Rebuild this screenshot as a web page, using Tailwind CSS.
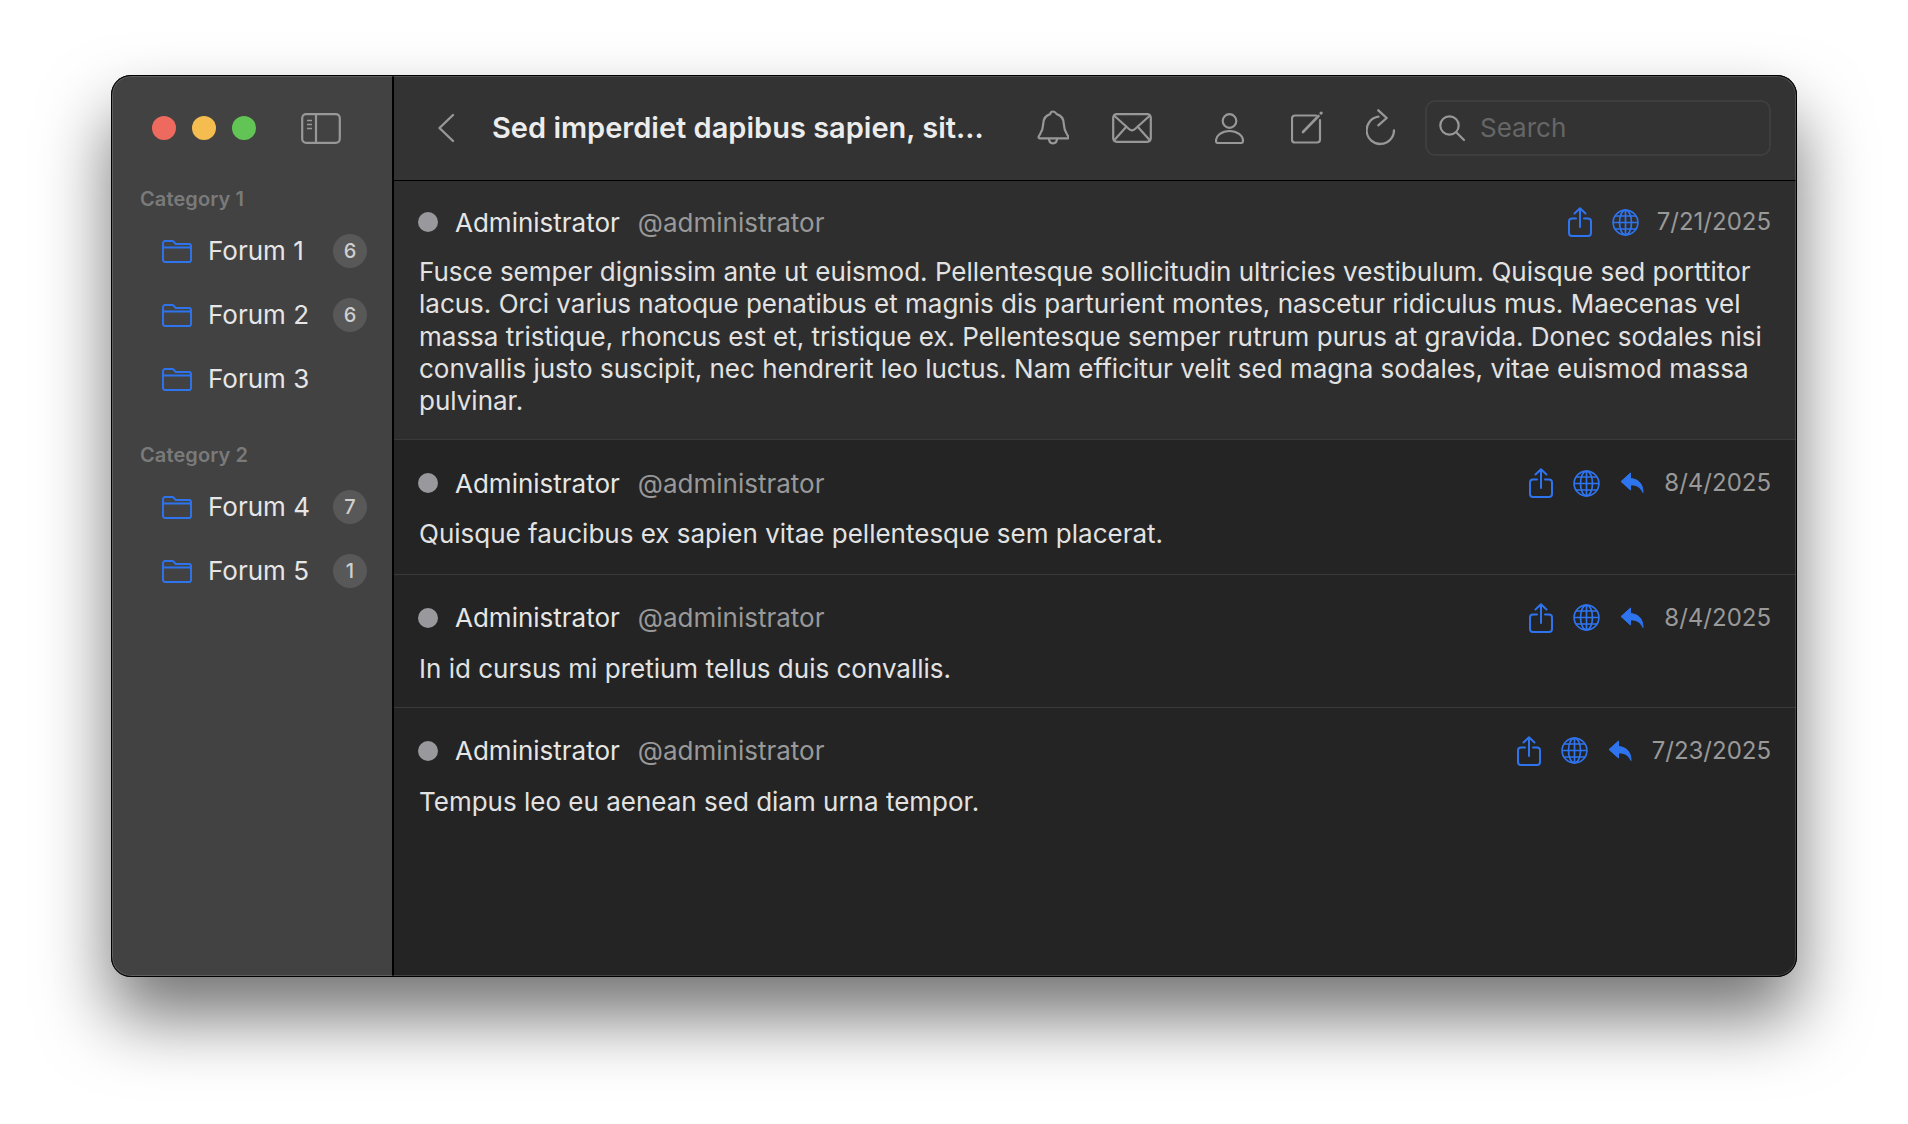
<!DOCTYPE html>
<html lang="en">
<head>
    <meta charset="UTF-8">
    <title>Forum</title>
    <script src="https://cdn.jsdelivr.net/npm/@tailwindcss/browser@4"></script>
</head>
<body class="bg-white font-['Inter',sans-serif] w-[1908px] h-[1124px] overflow-hidden pt-[75px] pl-[111px]">
    <!-- shared icons -->
    <svg class="hidden">
        <symbol id="folder" viewBox="0 0 30 23"><path fill="none" stroke="currentColor" stroke-width="1.9" stroke-linejoin="round" d="M1 8V3a2 2 0 0 1 2-2h7c1 0 1.600.4 2.200 1.100L13.500 4H27a2 2 0 0 1 2 2v14a2 2 0 0 1-2 2H3a2 2 0 0 1-2-2V8zM1 7.500h28"/></symbol>
        <symbol id="share" viewBox="0 0 24 30"><path fill="none" stroke="currentColor" stroke-width="2" stroke-linecap="round" stroke-linejoin="round" d="M8 11.500H4a3 3 0 0 0-3 3V26a3 3 0 0 0 3 3h16a3 3 0 0 0 3-3V14.500a3 3 0 0 0-3-3h-4M12 20V1.500M6.500 6.500 12 1.200l5.500 5.300"/></symbol>
        <symbol id="globe" viewBox="0 0 27 27"><g fill="none" stroke="currentColor" stroke-width="1.700"><circle cx="13.500" cy="13.500" r="12.400"/><ellipse cx="13.500" cy="13.500" rx="6" ry="12.400"/><path d="M13.500 1v25M1 13.500h25M3 7h21M3 20h21"/></g></symbol>
        <symbol id="reply" viewBox="0 0 24 22"><path fill="currentColor" stroke="currentColor" stroke-width="1" stroke-linejoin="round" d="M10.500 1 1 9.500l9.500 8.500v-5c5.500-.4 9.500 1.500 12.500 7.500 0-8.500-4.500-13.500-12.500-14z"/></symbol>
    </svg>

    <div class="relative w-[1686px] h-[902px] rounded-[20px] flex shadow-[0_40px_70px_rgba(0,0,0,0.55)] bg-[#242424]">
        <!-- sidebar -->
        <aside class="w-[283px] shrink-0 bg-[#424242] rounded-l-[20px] pl-[29px] border-r-2 border-black">
            <div class="h-[106px] flex items-center">
                <div class="flex gap-[16px] ml-[12px]">
                    <span class="w-[24px] h-[24px] rounded-full bg-[#ee6a5f]"></span>
                    <span class="w-[24px] h-[24px] rounded-full bg-[#f5bd4f]"></span>
                    <span class="w-[24px] h-[24px] rounded-full bg-[#61c454]"></span>
                </div>
                <svg class="ml-[45px]" width="40" height="31" viewBox="0 0 40 31" fill="none" stroke="#989898" stroke-width="2.200">
                    <rect x="1.200" y="1.200" width="37.600" height="28.600" rx="4"/>
                    <path d="M15 1.200v28.600"/>
                    <path d="M6 7.500h5M6 11.500h5M6 15.500h5" stroke-width="1.600"/>
                </svg>
            </div>
            <div class="text-[20px] font-semibold tracking-[0.1px] text-[#7a7a7a] leading-[24px] mt-[6px]">Category 1</div>
            <div class="mt-[8px]">
                <div class="h-[64px] flex items-center pl-[22px] text-[#2f74ef]">
                    <svg width="30" height="23"><use href="#folder"/></svg>
                    <span class="ml-[16px] text-[26px] text-[#e6e6e6] leading-[32px]">Forum 1</span>
                    <span class="ml-auto mr-[25px] w-[34px] h-[34px] rounded-full bg-[#585858] text-[#cfcfcf] text-[20px] font-medium flex items-center justify-center">6</span>
                </div>
                <div class="h-[64px] flex items-center pl-[22px] text-[#2f74ef]">
                    <svg width="30" height="23"><use href="#folder"/></svg>
                    <span class="ml-[16px] text-[26px] text-[#e6e6e6] leading-[32px]">Forum 2</span>
                    <span class="ml-auto mr-[25px] w-[34px] h-[34px] rounded-full bg-[#585858] text-[#cfcfcf] text-[20px] font-medium flex items-center justify-center">6</span>
                </div>
                <div class="h-[64px] flex items-center pl-[22px] text-[#2f74ef]">
                    <svg width="30" height="23"><use href="#folder"/></svg>
                    <span class="ml-[16px] text-[26px] text-[#e6e6e6] leading-[32px]">Forum 3</span>
                </div>
            </div>
            <div class="text-[20px] font-semibold tracking-[0.1px] text-[#7a7a7a] leading-[24px] mt-[32px]">Category 2</div>
            <div class="mt-[8px]">
                <div class="h-[64px] flex items-center pl-[22px] text-[#2f74ef]">
                    <svg width="30" height="23"><use href="#folder"/></svg>
                    <span class="ml-[16px] text-[26px] text-[#e6e6e6] leading-[32px]">Forum 4</span>
                    <span class="ml-auto mr-[25px] w-[34px] h-[34px] rounded-full bg-[#585858] text-[#cfcfcf] text-[20px] font-medium flex items-center justify-center">7</span>
                </div>
                <div class="h-[64px] flex items-center pl-[22px] text-[#2f74ef]">
                    <svg width="30" height="23"><use href="#folder"/></svg>
                    <span class="ml-[16px] text-[26px] text-[#e6e6e6] leading-[32px]">Forum 5</span>
                    <span class="ml-auto mr-[25px] w-[34px] h-[34px] rounded-full bg-[#585858] text-[#cfcfcf] text-[20px] font-medium flex items-center justify-center">1</span>
                </div>
            </div>
        </aside>

        <!-- main -->
        <main class="flex-1 min-w-0 flex flex-col rounded-r-[20px] overflow-hidden">
            <header class="h-[106px] shrink-0 bg-[#333333] border-b border-black flex items-center pl-[43px] pr-[26px]">
                <svg class="shrink-0" width="18" height="30" viewBox="0 0 18 30" fill="none" stroke="#989898" stroke-width="2.400" stroke-linecap="round" stroke-linejoin="round"><path d="M16 2 2.500 15 16 28"/></svg>
                <h1 class="ml-[37px] w-[545px] shrink-0 text-[29px] font-semibold text-[#ececec] whitespace-nowrap">Sed imperdiet dapibus sapien, sit...</h1>
                <!-- bell -->
                <svg class="shrink-0" width="32" height="35" viewBox="0 0 32 35" fill="none" stroke="#989898" stroke-width="2.200" stroke-linejoin="round"><path d="M16 1.500c-1.600 0-2.600 1-2.800 2.600C8.600 5.400 6.500 9 6.300 13.500c-.2 5.500-1.500 8-3.400 11-.8 1.200-1.400 2-1.400 2.800 0 .6.400 1 1.200 1h27.600c.8 0 1.200-.4 1.200-1 0-.8-.6-1.600-1.400-2.800-1.900-3-3.200-5.500-3.400-11C26.500 9 24.400 5.400 19.800 4.100 18.600 2.500 17.600 1.500 16 1.500z"/><path d="M12 28.500c0 3 1.800 4.800 4 4.800s4-1.800 4-4.800"/></svg>
                <!-- envelope -->
                <svg class="shrink-0 ml-[43px]" width="40" height="30" viewBox="0 0 40 30" fill="none" stroke="#989898" stroke-width="2.200" stroke-linejoin="round" stroke-linecap="round"><rect x="1.200" y="1.200" width="37.600" height="27.600" rx="3.500"/><path d="M2 2.500 17 16c1.800 1.600 4.200 1.600 6 0L38 2.500M2 27.500 14.500 13.500M38 27.500 25.500 13.500"/></svg>
                <!-- person -->
                <svg class="shrink-0 ml-[63px]" width="30" height="32" viewBox="0 0 30 32" fill="none" stroke="#989898" stroke-width="2.200"><circle cx="14.500" cy="9" r="6.800"/><path d="M3 31h23a2 2 0 0 0 2-2c0-5.500-6-10-13.500-10S1 23.500 1 29a2 2 0 0 0 2 2z"/></svg>
                <!-- compose -->
                <svg class="shrink-0 ml-[46px]" width="32" height="33" viewBox="0 0 32 33" fill="none" stroke="#989898" stroke-width="2.200" stroke-linecap="round"><path d="M25 4.500H4a3 3 0 0 0-3 3V28.500a3 3 0 0 0 3 3H26a3 3 0 0 0 3-3V9"/><path d="M12 21 27.500 5" stroke-width="2.600"/><path d="M30 2.200 30.300 2" stroke-width="3"/></svg>
                <!-- refresh -->
                <svg class="shrink-0 ml-[43px]" width="30" height="37" viewBox="0 0 30 37" fill="none" stroke="#989898" stroke-width="2.300" stroke-linecap="round" stroke-linejoin="round"><path d="M28 21.300A13.700 13.700 0 1 1 12.500 7.700"/><path d="M12.300 1.300 20.700 9l-8.400 7.300"/></svg>
                <!-- search -->
                <div class="ml-auto w-[346px] h-[56px] rounded-[10px] border-2 border-[#3e3e3e] flex items-center pl-[12px]">
                    <svg class="shrink-0" width="26" height="26" viewBox="0 0 26 26" fill="none" stroke="#989898" stroke-width="2.200" stroke-linecap="round"><circle cx="10.500" cy="10.500" r="9.200"/><path d="M17.500 17.500 25 25"/></svg>
                    <span class="ml-[15px] text-[26px] text-[#666666]">Search</span>
                </div>
            </header>

            <div class="pl-[25px] pr-[26px] pt-[23px] pb-[22px] bg-[#2e2e2e] border-b border-[#3a3a3a]">
                <div class="h-[36px] flex items-center">
                    <span class="-ml-px w-[20px] h-[20px] rounded-full bg-[#98989d]"></span>
                    <span class="ml-[17px] text-[26px] text-[#e6e6e6]">Administrator</span>
                    <span class="ml-[18px] text-[26px] text-[#999999]">@administrator</span>
                    <div class="ml-auto flex items-center text-[#2f74ef]">
                        <svg width="24" height="30"><use href="#share"/></svg>
                        <svg class="ml-[20px]" width="27" height="27"><use href="#globe"/></svg>
                        <span class="ml-[18px] text-[24px] text-[#999999]">7/21/2025</span>
                    </div>
                </div>
                <p class="mt-[16px] text-[26px] leading-[32.25px] text-[#e2e2e2]">Fusce semper dignissim ante ut euismod. Pellentesque sollicitudin ultricies vestibulum. Quisque sed porttitor lacus. Orci varius natoque penatibus et magnis dis parturient montes, nascetur ridiculus mus. Maecenas vel massa tristique, rhoncus est et, tristique ex. Pellentesque semper rutrum purus at gravida. Donec sodales nisi convallis justo suscipit, nec hendrerit leo luctus. Nam efficitur velit sed magna sodales, vitae euismod massa pulvinar.</p>
            </div>

            <div class="pl-[25px] pr-[26px] pt-[25px] pb-[23px] border-b border-[#3a3a3a]">
                <div class="h-[36px] flex items-center">
                    <span class="-ml-px w-[20px] h-[20px] rounded-full bg-[#98989d]"></span>
                    <span class="ml-[17px] text-[26px] text-[#e6e6e6]">Administrator</span>
                    <span class="ml-[18px] text-[26px] text-[#999999]">@administrator</span>
                    <div class="ml-auto flex items-center text-[#2f74ef]">
                        <svg width="24" height="30"><use href="#share"/></svg>
                        <svg class="ml-[20px]" width="27" height="27"><use href="#globe"/></svg>
                        <svg class="ml-[20px]" width="24" height="22"><use href="#reply"/></svg>
                        <span class="ml-[20px] text-[24px] text-[#999999]">8/4/2025</span>
                    </div>
                </div>
                <p class="mt-[17px] text-[26px] leading-[32.25px] text-[#e2e2e2]">Quisque faucibus ex sapien vitae pellentesque sem placerat.</p>
            </div>

            <div class="pl-[25px] pr-[26px] pt-[25px] pb-[22px] border-b border-[#3a3a3a]">
                <div class="h-[36px] flex items-center">
                    <span class="-ml-px w-[20px] h-[20px] rounded-full bg-[#98989d]"></span>
                    <span class="ml-[17px] text-[26px] text-[#e6e6e6]">Administrator</span>
                    <span class="ml-[18px] text-[26px] text-[#999999]">@administrator</span>
                    <div class="ml-auto flex items-center text-[#2f74ef]">
                        <svg width="24" height="30"><use href="#share"/></svg>
                        <svg class="ml-[20px]" width="27" height="27"><use href="#globe"/></svg>
                        <svg class="ml-[20px]" width="24" height="22"><use href="#reply"/></svg>
                        <span class="ml-[20px] text-[24px] text-[#999999]">8/4/2025</span>
                    </div>
                </div>
                <p class="mt-[17px] text-[26px] leading-[32.25px] text-[#e2e2e2]">In id cursus mi pretium tellus duis convallis.</p>
            </div>

            <div class="pl-[25px] pr-[26px] pt-[25px] pb-[23px]">
                <div class="h-[36px] flex items-center">
                    <span class="-ml-px w-[20px] h-[20px] rounded-full bg-[#98989d]"></span>
                    <span class="ml-[17px] text-[26px] text-[#e6e6e6]">Administrator</span>
                    <span class="ml-[18px] text-[26px] text-[#999999]">@administrator</span>
                    <div class="ml-auto flex items-center text-[#2f74ef]">
                        <svg width="24" height="30"><use href="#share"/></svg>
                        <svg class="ml-[20px]" width="27" height="27"><use href="#globe"/></svg>
                        <svg class="ml-[20px]" width="24" height="22"><use href="#reply"/></svg>
                        <span class="ml-[20px] text-[24px] text-[#999999]">7/23/2025</span>
                    </div>
                </div>
                <p class="mt-[17px] text-[26px] leading-[32.25px] text-[#e2e2e2]">Tempus leo eu aenean sed diam urna tempor.</p>
            </div>
        </main>
        <div class="absolute inset-0 rounded-[20px] border border-black pointer-events-none shadow-[inset_0_0_0_1px_rgba(255,255,255,0.15)]"></div>
    </div>
</body>
</html>
